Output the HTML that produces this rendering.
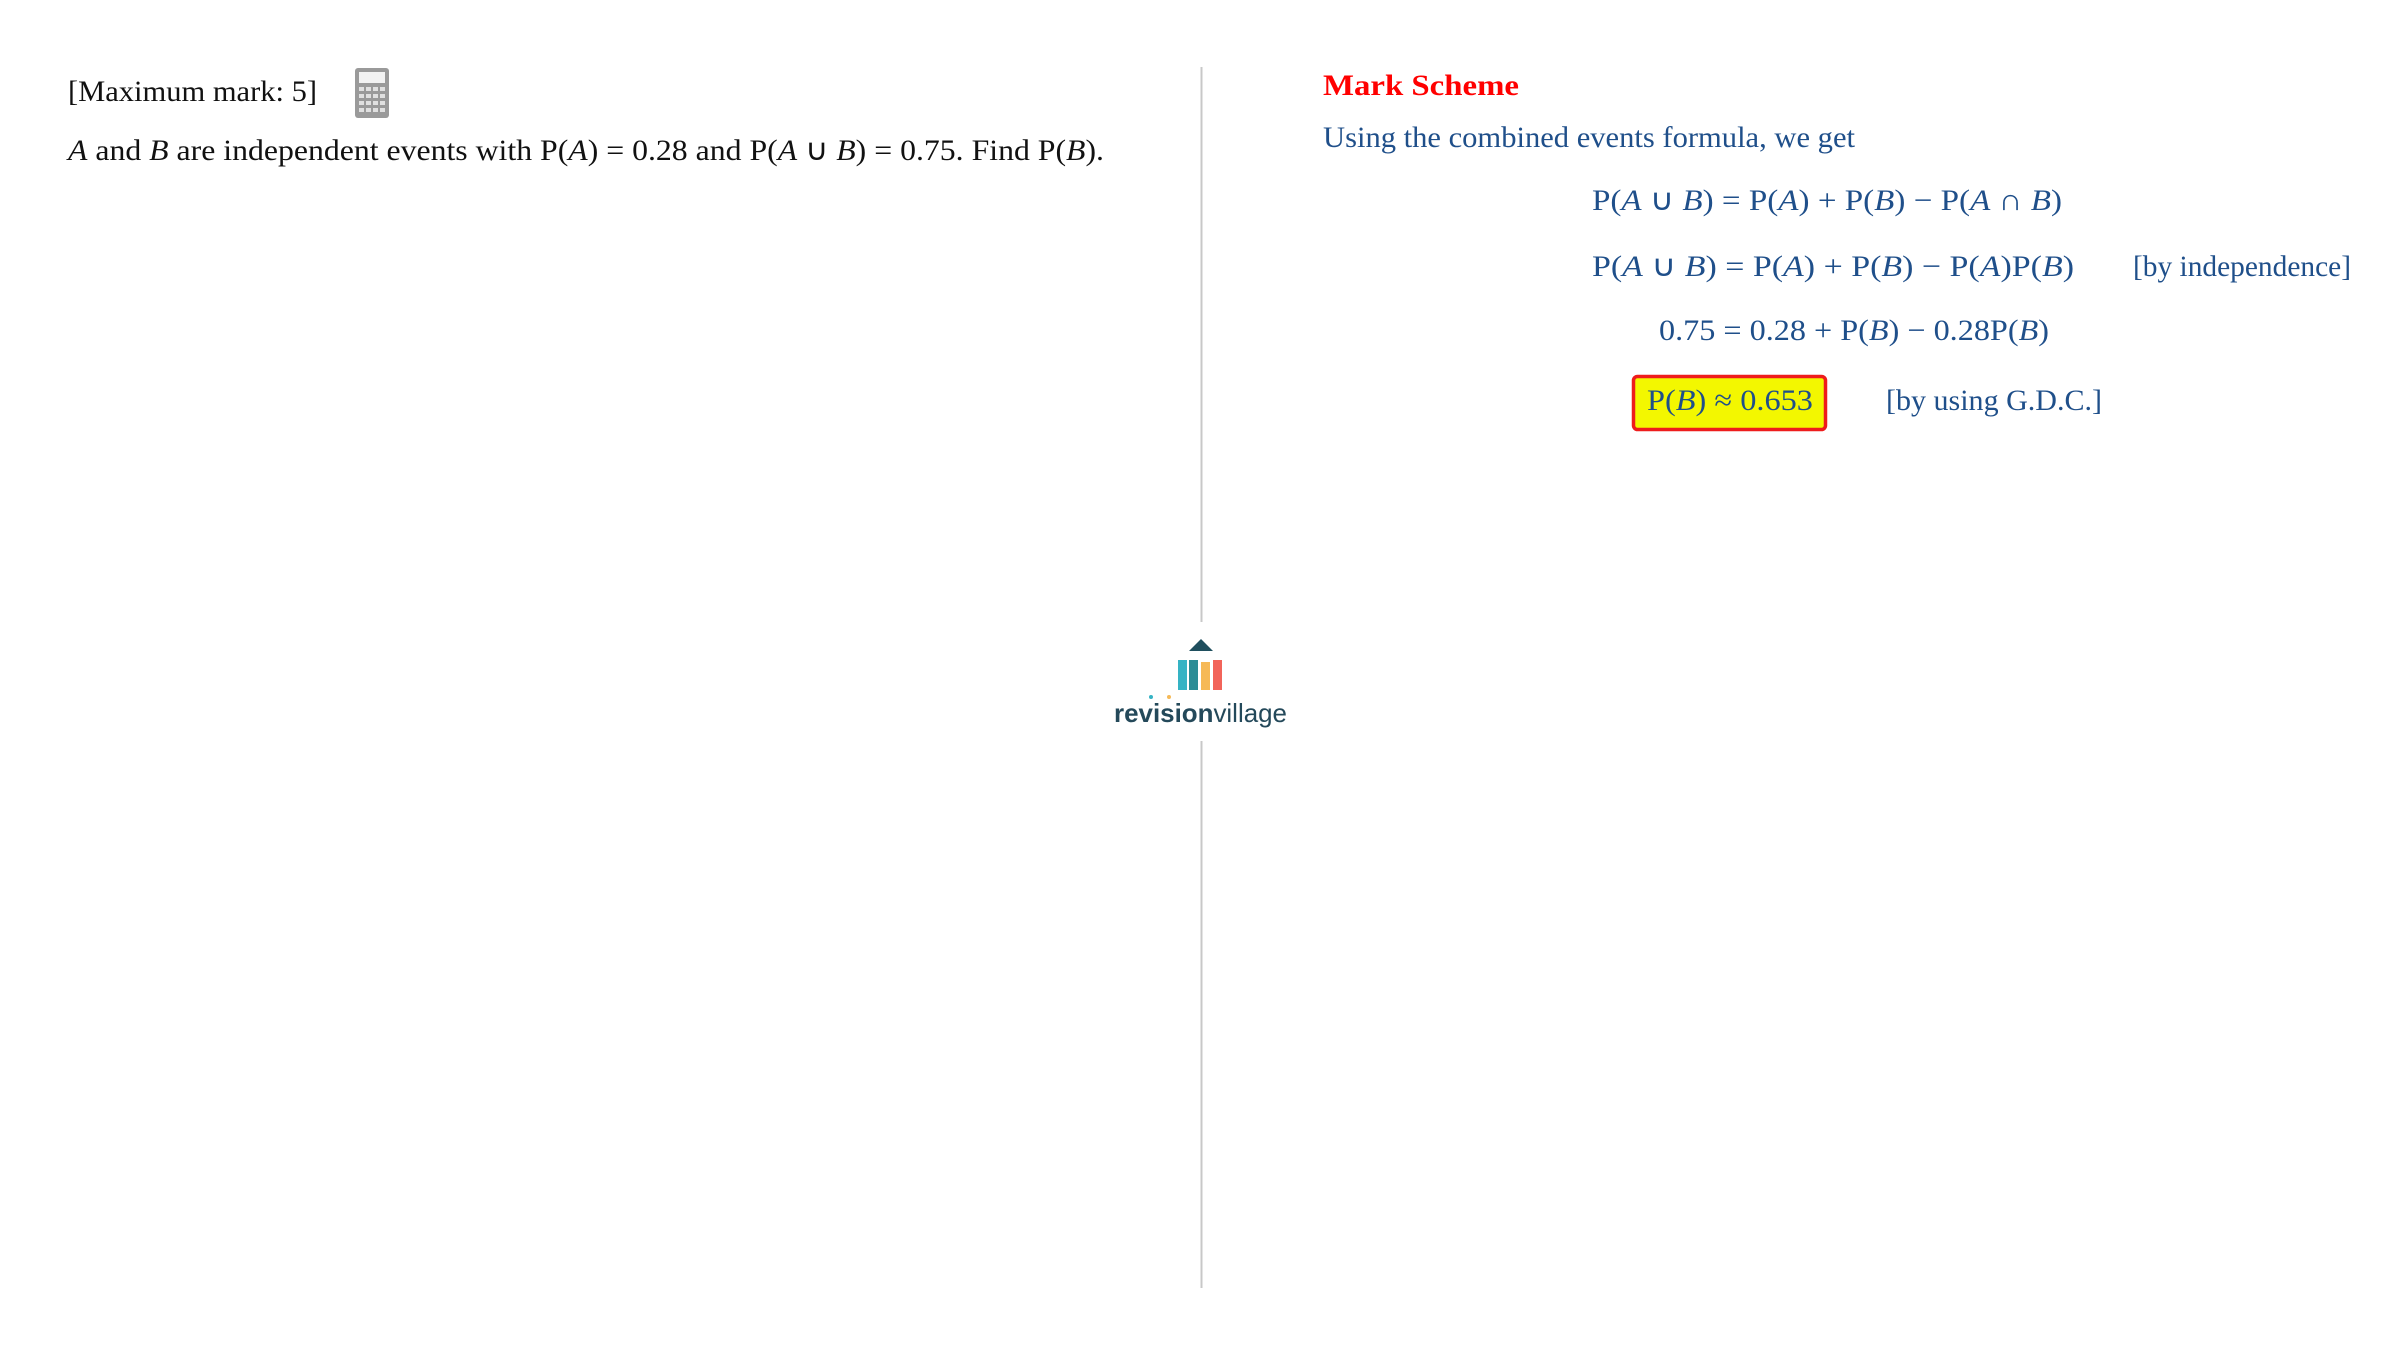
<!DOCTYPE html>
<html><head><meta charset="utf-8"><style>
html,body{margin:0;padding:0;background:#fff;width:2400px;height:1351px;overflow:hidden}
svg{display:block}
text{font-family:"Liberation Serif",serif;font-size:30px}
</style></head><body>
<svg width="2400" height="1351" viewBox="0 0 2400 1351" xmlns="http://www.w3.org/2000/svg">
<rect width="2400" height="1351" fill="#fff"/>
<line x1="1201.5" y1="67" x2="1201.5" y2="622" stroke="#c8c8c8" stroke-width="2"/>
<line x1="1201.5" y1="741" x2="1201.5" y2="1288" stroke="#c8c8c8" stroke-width="2"/>
<text x="68" y="101" fill="#111" textLength="249" lengthAdjust="spacingAndGlyphs">[Maximum mark: 5]</text>
<g>
<rect x="355" y="68" width="34" height="50" rx="3" fill="#9a9a9a"/>
<rect x="359" y="72" width="26" height="11" fill="#f2f2f2"/>
<g fill="#e0e0e0">
<rect x="359" y="87" width="5" height="4"/><rect x="366" y="87" width="5" height="4"/><rect x="373" y="87" width="5" height="4"/><rect x="380" y="87" width="5" height="4"/>
<rect x="359" y="94" width="5" height="4"/><rect x="366" y="94" width="5" height="4"/><rect x="373" y="94" width="5" height="4"/><rect x="380" y="94" width="5" height="4"/>
<rect x="359" y="101" width="5" height="4"/><rect x="366" y="101" width="5" height="4"/><rect x="373" y="101" width="5" height="4"/><rect x="380" y="101" width="5" height="4"/>
<rect x="359" y="108" width="5" height="4"/><rect x="366" y="108" width="5" height="4"/><rect x="373" y="108" width="5" height="4"/><rect x="380" y="108" width="5" height="4"/>
</g>
</g>
<text x="68" y="160" fill="#111" textLength="1036" lengthAdjust="spacingAndGlyphs"><tspan font-style="italic">A</tspan> and <tspan font-style="italic">B</tspan> are independent events with P(<tspan font-style="italic">A</tspan>) = 0.28 and P(<tspan font-style="italic">A</tspan> ∪ <tspan font-style="italic">B</tspan>) = 0.75. Find P(<tspan font-style="italic">B</tspan>).</text>
<polygon points="1189,651 1201,639 1213,651" fill="#1f4f5e"/>
<rect x="1178" y="660" width="9" height="30" fill="#35b3c4"/>
<rect x="1189" y="660" width="9" height="30" fill="#2a8c96"/>
<rect x="1201" y="662" width="9" height="28" fill="#f6b957"/>
<rect x="1213" y="660" width="9" height="30" fill="#f2645a"/>
<text x="1114" y="722" style="font-family:'Liberation Sans',sans-serif;font-size:26px" fill="#24495a" textLength="173" lengthAdjust="spacingAndGlyphs"><tspan font-weight="bold">revision</tspan>village</text>
<circle cx="1151" cy="697" r="2" fill="#35b3c4"/><circle cx="1169" cy="697" r="2" fill="#f6b957"/>
<text x="1323" y="95" fill="#ff0000" font-weight="bold" textLength="196" lengthAdjust="spacingAndGlyphs">Mark Scheme</text>
<text x="1323" y="147" fill="#1f4f8a" textLength="532" lengthAdjust="spacingAndGlyphs">Using the combined events formula, we get</text>
<text x="1592" y="210" fill="#1f4f8a" textLength="470" lengthAdjust="spacingAndGlyphs">P(<tspan font-style="italic">A</tspan> ∪ <tspan font-style="italic">B</tspan>) = P(<tspan font-style="italic">A</tspan>) + P(<tspan font-style="italic">B</tspan>) − P(<tspan font-style="italic">A</tspan> ∩ <tspan font-style="italic">B</tspan>)</text>
<text x="1592" y="276" fill="#1f4f8a" textLength="482" lengthAdjust="spacingAndGlyphs">P(<tspan font-style="italic">A</tspan> ∪ <tspan font-style="italic">B</tspan>) = P(<tspan font-style="italic">A</tspan>) + P(<tspan font-style="italic">B</tspan>) − P(<tspan font-style="italic">A</tspan>)P(<tspan font-style="italic">B</tspan>)</text>
<text x="2133" y="276" fill="#1f4f8a" textLength="218" lengthAdjust="spacingAndGlyphs">[by independence]</text>
<text x="1659" y="340" fill="#1f4f8a" textLength="390" lengthAdjust="spacingAndGlyphs">0.75 = 0.28 + P(<tspan font-style="italic">B</tspan>) − 0.28P(<tspan font-style="italic">B</tspan>)</text>
<rect x="1633.5" y="376.5" width="192" height="53" rx="4" fill="#f3f700" stroke="#ee1c1c" stroke-width="3.5"/>
<text x="1647" y="410" fill="#1f4f8a" textLength="166" lengthAdjust="spacingAndGlyphs">P(<tspan font-style="italic">B</tspan>) ≈ 0.653</text>
<text x="1886" y="410" fill="#1f4f8a" textLength="216" lengthAdjust="spacingAndGlyphs">[by using G.D.C.]</text>
</svg>
</body></html>
